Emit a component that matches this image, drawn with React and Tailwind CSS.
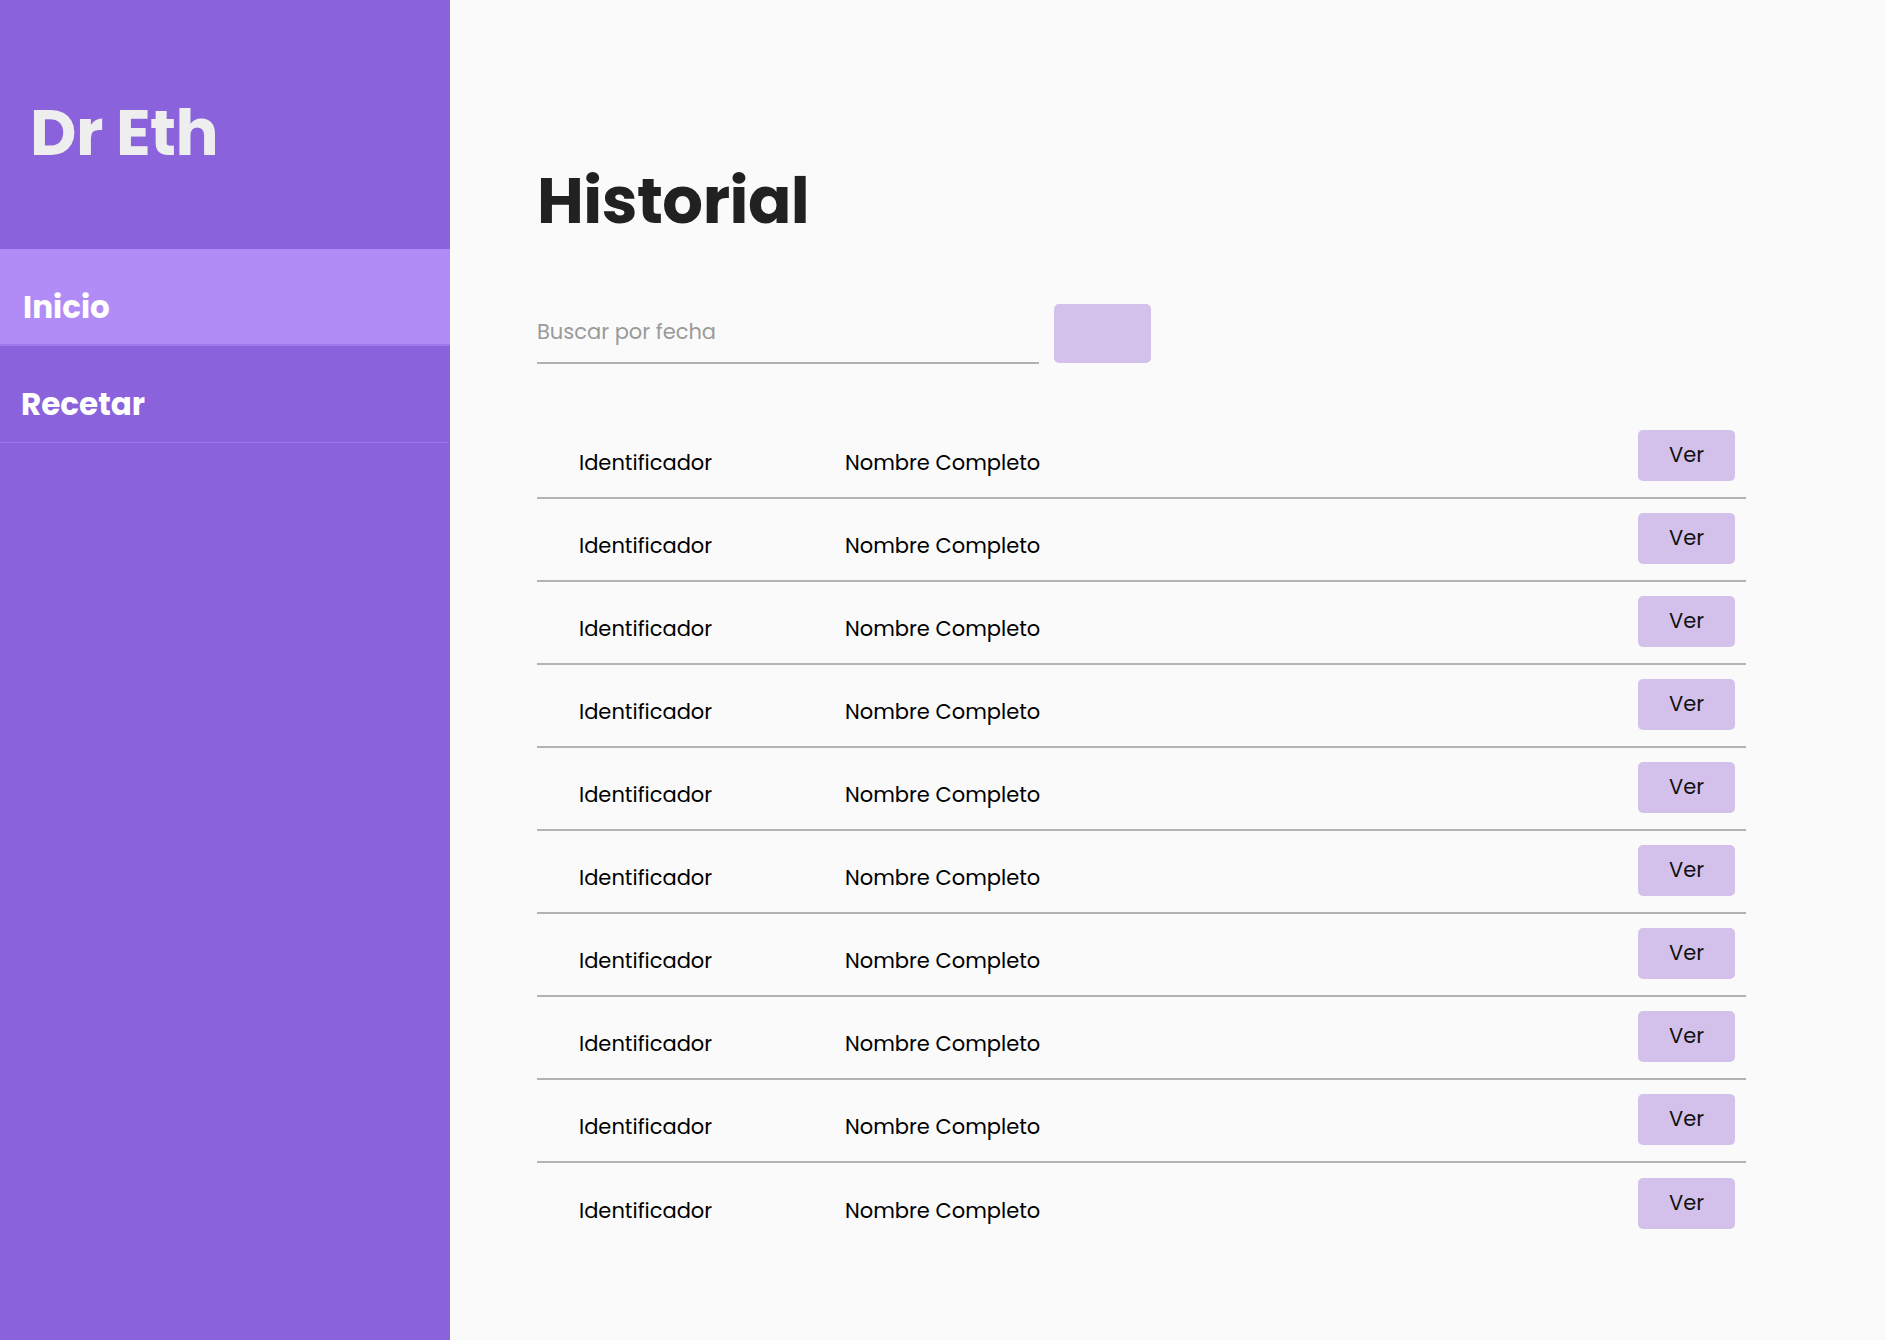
import React from "react";

const rows = Array.from({ length: 10 }, (_, i) => ({
  id: i + 1,
  identificador: "Identificador",
  nombre: "Nombre Completo",
}));

export default function App() {
  return (
    <div
      className="flex min-h-screen w-full bg-[#fafafa]"
      style={{ fontFamily: "Poppins, Inter, 'Noto Sans', sans-serif" }}
    >
      {/* SIDEBAR */}
      <aside className="w-[450px] shrink-0 bg-[#8a62db] flex flex-col min-h-[1340px]">
        <div className="h-[249px] pl-[30px] pt-[101px]">
          <h2 className="text-[64px] leading-none font-bold text-[#eeeeee] tracking-[-0.5px]">
            Dr Eth
          </h2>
        </div>

        <nav className="flex flex-col">
          <a className="h-[97px] flex items-center pl-[23px] pt-[21px] bg-[#b28cf6] border-b-[2px] border-[#9f78ea] text-white text-[31px] font-bold cursor-pointer">
            Inicio
          </a>
          <a className="h-[97px] flex items-center pl-[21px] pt-[21px] border-b border-[#9b76e9] mr-[2px] text-white text-[31px] font-bold cursor-pointer">
            Recetar
          </a>
        </nav>
      </aside>

      {/* MAIN */}
      <main className="flex-1 pl-[87px] pr-[141px] pt-[169px]">
        <h1 className="text-[64px] leading-none font-bold text-[#212121] tracking-[-0.5px]">
          Historial
        </h1>

        {/* SEARCH */}
        <div className="flex items-center gap-[15px] mt-[70px]">
          <div className="w-[502px] mt-[4px] border-b-2 border-[#b1b1b1] pb-[14px] pt-[9px]">
            <input
              type="text"
              placeholder="Buscar por fecha"
              className="w-full bg-transparent outline-none text-[21px] text-[#444] placeholder:text-[#9a9a9a]"
            />
          </div>
          <button className="w-[97px] h-[59px] rounded-[5px] bg-[#d3c1ec]" />
        </div>

        {/* LIST */}
        <div className="mt-[52px] w-[1209px]">
          {rows.map((r, i) => (
            <div
              key={r.id}
              className={
                "h-[83px] flex items-center pl-[42px] pr-[11px] " +
                (i < rows.length - 1 ? "border-b-2 border-[#b3b3b3]" : "")
              }
            >
              <span className="w-[266px] pt-[14px] text-[21px] text-black">
                {r.identificador}
              </span>
              <span className="flex-1 pt-[14px] text-[21px] text-black">
                {r.nombre}
              </span>
              <button className="w-[97px] h-[51px] rounded-[5px] bg-[#d3c1ec] text-[21px] text-[#111] mb-[2px]">
                Ver
              </button>
            </div>
          ))}
        </div>
      </main>
    </div>
  );
}
